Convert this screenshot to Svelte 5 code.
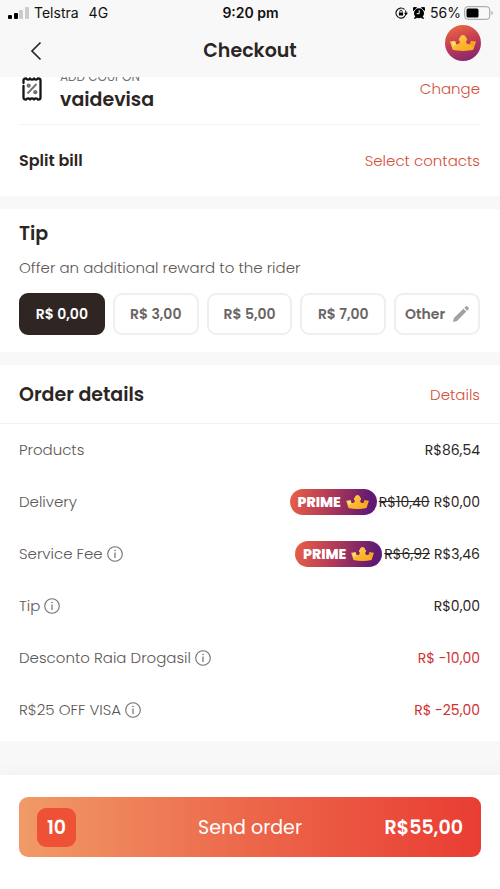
<script lang="ts">
  let selectedTip = 'R$ 0,00';

  const tips = ['R$ 0,00', 'R$ 3,00', 'R$ 5,00', 'R$ 7,00'];

  const rows = [
    { label: 'Products', value: 'R$86,54' },
    { label: 'Delivery', value: 'R$0,00', old: 'R$10,40', prime: true },
    { label: 'Service Fee', value: 'R$3,46', old: 'R$6,92', prime: true, info: true },
    { label: 'Tip', value: 'R$0,00', info: true },
    { label: 'Desconto Raia Drogasil', value: 'R$ -10,00', info: true, discount: true },
    { label: 'R$25 OFF VISA', value: 'R$ -25,00', info: true, discount: true },
  ];
</script>

{#snippet crown()}
  <svg class="crown" viewBox="0 0 26 16" aria-hidden="true">
    <defs>
      <linearGradient id="gold" x1="0" y1="0" x2="1" y2="1">
        <stop offset="0" stop-color="#ffd75a" />
        <stop offset="0.5" stop-color="#fbb92f" />
        <stop offset="1" stop-color="#f6a51f" />
      </linearGradient>
    </defs>
    <path
      fill="url(#gold)"
      d="M0 6.500 5 6l1 3.200c2.500.3 4-.7 4-2.900C8.500 5.600 8.500 3.200 10 2.800 10.300 1 11.500 0 13 0s2.700 1 3 2.800c1.500.4 1.500 2.800 0 3.500 0 2.200 1.500 3.200 4 2.900L21 6l5 .5L23.300 14.800C17 16.300 9 16.300 2.700 14.800Z"
    />
    <path fill="#ffdf78" d="M5 6 6 9.200 2.700 12 1.700 7Z" />
    <path fill="#f2a320" d="M21 6 20 9.200 23.300 12 24.300 7Z" />
  </svg>
{/snippet}

<div class="screen">
  <header class="top">
    <div class="status">
      <div class="carrier">
        <svg width="21" height="12" viewBox="0 0 21 12" aria-hidden="true">
          <rect x="0" y="8" width="4" height="4" rx="1" />
          <rect x="6" y="6" width="4" height="6" rx="1" />
          <rect x="11" y="3" width="4" height="9" rx="1" fill="#cbcbcb" />
          <rect x="17" y="0" width="4" height="12" rx="1" fill="#cbcbcb" />
        </svg>
        <span>Telstra</span>
        <span class="network">4G</span>
      </div>
      <span class="time">9:20 pm</span>
      <div class="indicators">
        <svg width="13" height="12" viewBox="0 0 13 12" aria-hidden="true">
          <path d="M11 6A5 5 0 1 1 9.500 2.500M11 6a5 5 0 0 0-.6-2.400" fill="none" stroke="#111" stroke-width="1.100" />
          <path d="M9 5.800h4L11 8.300Z" />
          <rect x="3.900" y="5.400" width="4.200" height="3.200" rx=".4" />
          <path d="M4.800 5.500V4.400a1.200 1.200 0 0 1 2.400 0v1.100" fill="none" stroke="#111" stroke-width=".9" />
        </svg>
        <svg class="alarm" width="12" height="12" viewBox="0 0 12 12" aria-hidden="true">
          <circle cx="6" cy="6.300" r="5" />
          <path d="M.5 3.500A2 2 0 0 1 3.500.7ZM11.500 3.500A2 2 0 0 0 8.500.7ZM1.500 11.500l1-2 1.500 1ZM10.500 11.500l-1-2-1.500 1Z" stroke="#111" stroke-width="1" />
          <path d="M6.200 3.200v3.500H3.600" fill="none" stroke="#fff" stroke-width="1" />
        </svg>
        <span>56%</span>
        <svg width="29" height="14" viewBox="0 0 29 14" aria-hidden="true">
          <rect x=".7" y=".7" width="25" height="12.600" rx="3" fill="none" stroke="#9b9b9b" />
          <rect x="2.500" y="2.500" width="12" height="9" rx="1.500" />
          <path d="M27.500 4.800c1.500.6 1.500 3.800 0 4.400Z" fill="#9b9b9b" />
        </svg>
      </div>
    </div>
    <div class="title-bar">
      <button class="back" aria-label="Back">
        <svg width="12" height="20" viewBox="0 0 12 20" aria-hidden="true">
          <path d="M10.500 1.500 2 10l8.500 8.500" fill="none" stroke="#2b2523" stroke-width="1.700" />
        </svg>
      </button>
      <h1>Checkout</h1>
      <button class="prime-round" aria-label="Prime">{@render crown()}</button>
    </div>
  </header>

  <main>
    <section class="coupon">
      <svg width="20" height="24" viewBox="0 0 20 24" aria-hidden="true">
        <path
          d="M1.500 6V3.500C1.500 2 2.500 1.400 4 1.400 5 3 6.800 3 7.800 1.700h.4C9.200 3 10.800 3 11.800 1.700h.4C13.200 3 15 3 16 1.400c1.500 0 2.500.6 2.500 2.100v17c0 1.500-1 2.100-2.500 2.100-1-1.600-2.800-1.600-3.800-.3h-.4c-1-1.300-2.600-1.300-3.600 0h-.4c-1-1.300-2.800-1.300-3.800.3-1.500 0-2.500-.6-2.500-2.100V9"
          fill="none" stroke="#171414" stroke-width="2.300" stroke-linecap="round"
        />
        <path d="M14.500 7 5.500 16.500" stroke="#77716f" stroke-width="1.900" />
        <circle cx="6.700" cy="8.700" r="2.100" fill="#77716f" />
        <circle cx="13.300" cy="15.200" r="2.100" fill="#77716f" />
      </svg>
      <div class="coupon-text">
        <span class="coupon-label">ADD COUPON</span>
        <span class="coupon-name">vaidevisa</span>
      </div>
      <a href="#coupon" class="link">Change</a>
    </section>

    <section class="split">
      <h3>Split bill</h3>
      <a href="#contacts" class="link">Select contacts</a>
    </section>

    <section class="tip">
      <h2>Tip</h2>
      <p>Offer an additional reward to the rider</p>
      <div class="tip-options">
        {#each tips as tip}
          <button
            class="tip-btn"
            class:active={selectedTip === tip}
            aria-pressed={selectedTip === tip}
            onclick={() => selectedTip = tip}
          >{tip}</button>
        {/each}
        <button
          class="tip-btn"
          class:active={selectedTip === 'Other'}
          aria-pressed={selectedTip === 'Other'}
          onclick={() => selectedTip = 'Other'}
        >
          Other
          <svg width="16" height="16" viewBox="0 0 16 16" aria-hidden="true">
            <path d="M0 16 .9 12 10.400 2.700 13.300 5.600 4 15ZM11.300 1.800 12.600.6c.6-.6 1.300-.6 1.900 0l.9.9c.6.6.6 1.300 0 1.900l-1.200 1.300Z" fill="#a3a09f" />
          </svg>
        </button>
      </div>
    </section>

    <section class="order">
      <div class="order-head">
        <h2>Order details</h2>
        <a href="#details" class="link">Details</a>
      </div>
      <dl>
        {#each rows as row}
          <div class="row">
            <dt>
              {row.label}
              {#if row.info}
                <button class="info" aria-label="About {row.label}">
                  <svg width="16" height="16" viewBox="0 0 16 16" aria-hidden="true">
                    <circle cx="8" cy="8" r="7.300" fill="none" stroke="#74706f" stroke-width="1.100" />
                    <path d="M8 6.500V12" stroke="#74706f" stroke-width="1.200" />
                    <circle cx="8" cy="4.500" r=".8" fill="#74706f" />
                  </svg>
                </button>
              {/if}
            </dt>
            <dd class:discount={row.discount}>
              {#if row.prime}
                <span class="prime">PRIME {@render crown()}</span>
              {/if}
              {#if row.old}
                <s>{row.old}</s>
              {/if}
              <span>{row.value}</span>
            </dd>
          </div>
        {/each}
      </dl>
    </section>
  </main>

  <footer>
    <button class="send">
      <span class="count">10</span>
      <span>Send order</span>
      <span class="total">R$55,00</span>
    </button>
  </footer>
</div>

<style>
  :global(body) {
    background: #fff;
  }

  .screen {
    min-height: 100vh;
    display: flex;
    flex-direction: column;
    background: #f8f8f8;
    color: #2b2523;
    font-family: Poppins, Inter, sans-serif;
    font-size: 15px;
    line-height: 20px;
    font-weight: 300;
  }

  .screen * {
    box-sizing: border-box;
  }

  h1,
  h2,
  h3,
  p,
  dl,
  dd {
    margin: 0;
  }

  h1,
  h2 {
    font-size: 19px;
    line-height: 26px;
    font-weight: 600;
  }

  h3 {
    font-size: 16px;
    line-height: 22px;
    font-weight: 600;
  }

  svg {
    display: block;
    flex-shrink: 0;
  }

  button {
    font-family: inherit;
    border: none;
    background: none;
    padding: 0;
    cursor: pointer;
  }

  .link {
    color: #d24f38;
    text-decoration: none;
  }

  .top {
    position: sticky;
    top: 0;
    z-index: 10;
    background: #f8f8f8;
  }

  .status {
    display: grid;
    grid-template-columns: 1fr auto 1fr;
    align-items: center;
    height: 25px;
    padding: 0 7px 0 8px;
    font-family: Inter, sans-serif;
    font-size: 14px;
    font-weight: 400;
    color: #111;
  }

  .carrier,
  .indicators {
    display: flex;
    align-items: center;
    gap: 5px;
  }

  .network {
    margin-left: 5px;
  }

  .time {
    font-weight: 600;
  }

  .indicators {
    justify-content: flex-end;
  }

  .indicators span {
    margin-right: -2px;
  }

  .title-bar {
    display: grid;
    grid-template-columns: 1fr auto 1fr;
    align-items: center;
    height: 52px;
    padding: 0 19px;
  }

  .back {
    justify-self: start;
    padding: 4px 11px;
  }

  .prime-round {
    justify-self: end;
    align-self: start;
    display: flex;
    align-items: center;
    justify-content: center;
    width: 36px;
    height: 36px;
    border-radius: 50%;
    background: linear-gradient(160deg, #ec6a41 5%, #c23a55 50%, #7b2475 95%);
  }

  .prime-round .crown {
    width: 26px;
    height: 16px;
  }

  section {
    background: #fff;
    padding: 0 20px 0 19px;
  }

  .coupon {
    display: flex;
    align-items: flex-start;
    height: 47px;
  }

  .coupon-text {
    display: flex;
    flex-direction: column;
    flex: 1;
    margin-top: -10px;
    padding-left: 18px;
  }

  .coupon > svg {
    margin-left: 3px;
  }

  .coupon .link {
    margin-top: 2px;
  }

  .coupon-label {
    font-size: 12px;
    line-height: 20px;
    font-weight: 400;
    color: #74706f;
  }

  .coupon-name {
    font-size: 19px;
    line-height: 26px;
    font-weight: 600;
  }

  .split {
    display: flex;
    align-items: center;
    justify-content: space-between;
    height: 72px;
    padding-top: 2px;
    background: linear-gradient(#f4f4f4, #f4f4f4) 19px 0 / calc(100% - 39px) 1px no-repeat #fff;
  }

  .tip {
    margin-top: 13px;
    padding-top: 12px;
    padding-bottom: 17px;
  }

  .tip p {
    margin: 11px 0 15px;
    color: #5c5756;
  }

  .tip-options {
    display: grid;
    grid-template-columns: repeat(5, 1fr);
    gap: 8px;
  }

  .tip-btn {
    display: flex;
    align-items: center;
    justify-content: center;
    gap: 8px;
    height: 42px;
    border: 2px solid #efefec;
    border-radius: 9px;
    background: #fff;
    color: #6a6463;
    font-size: 14px;
    font-weight: 600;
  }

  .tip-btn.active {
    background: #2f2624;
    border-color: #2f2624;
    color: #fff;
  }

  .order {
    margin-top: 13px;
    padding: 0 0 5px;
  }

  .order-head {
    display: flex;
    align-items: center;
    justify-content: space-between;
    height: 59px;
    padding: 1px 20px 0 19px;
    border-bottom: 1px solid #f1f1f1;
  }

  .row {
    display: flex;
    align-items: center;
    justify-content: space-between;
    height: 52px;
    padding: 0 20px 0 19px;
  }

  dt {
    display: flex;
    align-items: center;
    gap: 4px;
    color: #5c5756;
  }

  dd {
    display: flex;
    align-items: center;
    gap: 4px;
    font-size: 14px;
    font-weight: 400;
  }

  .discount {
    color: #d0312f;
  }

  .prime {
    display: flex;
    align-items: center;
    gap: 5px;
    height: 26px;
    margin-right: -2px;
    padding: 0 8px;
    border-radius: 13px;
    background: linear-gradient(100deg, #ea6045, #b23a58 45%, #611a72 90%);
    color: #fff;
    font-weight: 800;
  }

  .prime .crown {
    width: 23px;
    height: 14px;
  }

  footer {
    flex: 1;
    margin-top: 34px;
    padding: 22px 19px 32px;
    background: #fff;
    box-shadow: 0 -4px 16px rgb(0 0 0 / 0.03);
  }

  .send {
    display: grid;
    grid-template-columns: 1fr auto 1fr;
    align-items: center;
    width: 100%;
    height: 60px;
    padding: 1px 18px 0;
    border-radius: 9px;
    background: linear-gradient(90deg, #f19a68, #ec674a 50%, #e93d33);
    color: #fff;
    font-size: 19px;
    line-height: 26px;
  }

  .count {
    display: flex;
    align-items: center;
    justify-content: center;
    width: 39px;
    height: 39px;
    border-radius: 9px;
    background: #ee5135;
    font-weight: 600;
  }

  .total {
    justify-self: end;
    font-weight: 600;
  }
</style>
